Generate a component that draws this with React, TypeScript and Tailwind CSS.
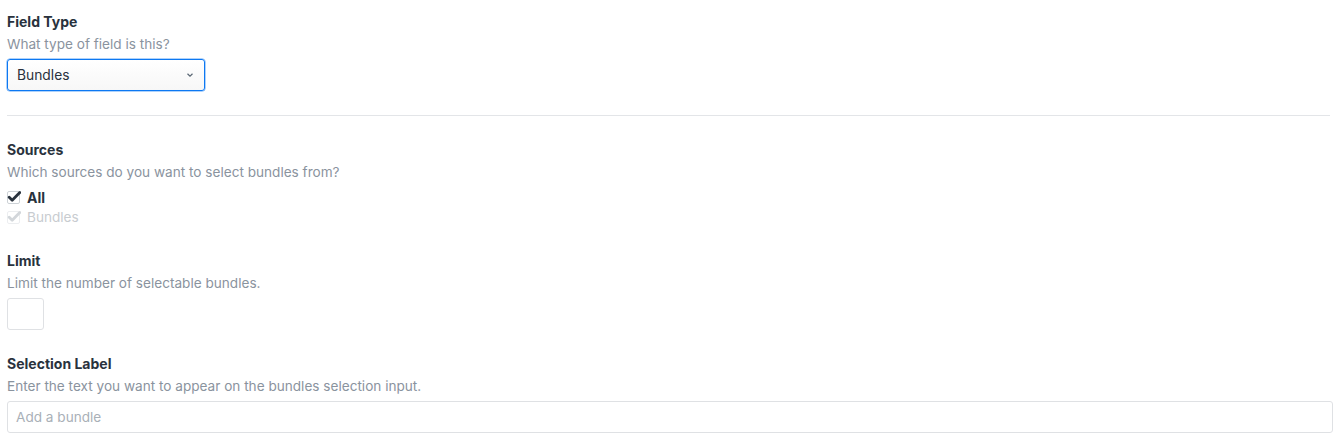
import React from "react";

const font = { fontFamily: 'Inter, "Liberation Sans", Arial, sans-serif' };

function Check({ color, box }: { color: string; box: string }) {
  return (
    <svg width="14" height="14" viewBox="0 0 14 14" className="shrink-0">
      <rect x="0.5" y="1.5" width="12" height="12" rx="1.5" fill="white" stroke={box} />
      <path d="M2.2 7.2 L5.2 10.2 L12.8 2.4" fill="none" stroke={color} strokeWidth="2.8" strokeLinecap="round" strokeLinejoin="round" />
    </svg>
  );
}

function Heading({ title, desc }: { title: string; desc: string }) {
  return (
    <div>
      <div className="text-[14px] leading-[20px] font-bold text-[#29323d]">{title}</div>
      <div className="mt-[2px] text-[13.6px] leading-[20px] text-[#8a939e]">{desc}</div>
    </div>
  );
}

export default function App() {
  return (
    <div className="w-[1337px] h-[438px] bg-white px-[7px] pt-[12px] overflow-hidden" style={font}>
      <Heading title="Field Type" desc="What type of field is this?" />
      <div className="mt-[5px] w-[198px] h-[32px] rounded-[3px] border border-[#0d78f2] bg-gradient-to-b from-white to-[#f7f7f7] flex items-center justify-between pl-[9px] pr-[10px] shadow-[0_0_0_0.5px_#5ea6f7]">
        <span className="text-[13.8px] text-[#29323d]">Bundles</span>
        <svg width="8" height="6" viewBox="0 0 8 6">
          <path d="M1.5 1.8 L4 4.2 L6.5 1.8" fill="none" stroke="#596673" strokeWidth="1.2" />
        </svg>
      </div>
      <div className="mt-[24px] h-px bg-[#e3e5e8]" />
      <div className="mt-[24px]">
        <Heading title="Sources" desc="Which sources do you want to select bundles from?" />
        <div className="mt-[5px] flex items-center gap-[6px] h-[20px]">
          <Check color="#29323d" box="#cdd2d6" />
          <span className="text-[14px] font-bold text-[#29323d]">All</span>
        </div>
        <div className="flex items-center gap-[6px] h-[20px]">
          <Check color="#d2d6da" box="#eceef0" />
          <span className="text-[13.6px] text-[#c8ccd0]">Bundles</span>
        </div>
      </div>
      <div className="mt-[24px]">
        <Heading title="Limit" desc="Limit the number of selectable bundles." />
        <div className="mt-[5px] w-[37px] h-[32px] rounded-[3px] border border-[#dfe1e4] bg-white" />
      </div>
      <div className="mt-[24px]">
        <Heading title="Selection Label" desc="Enter the text you want to appear on the bundles selection input." />
        <div className="mt-[5px] w-[1326px] h-[32px] rounded-[3px] border border-[#dfe1e4] bg-white flex items-center pl-[8px]">
          <span className="text-[13.6px] text-[#a9b0b7]">Add a bundle</span>
        </div>
      </div>
    </div>
  );
}
